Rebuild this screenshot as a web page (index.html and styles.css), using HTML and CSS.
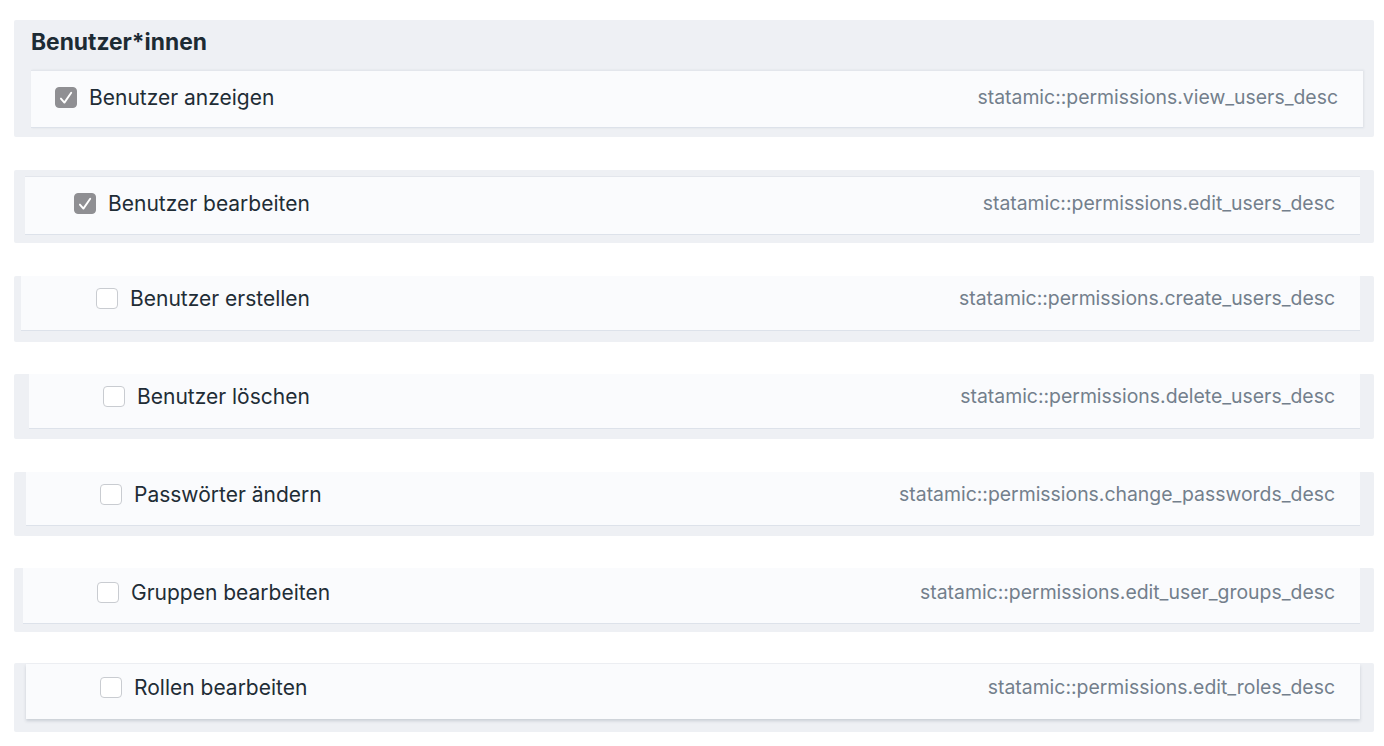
FILE: index.html
```html
<!DOCTYPE html>
<html lang="de">
<head>
<meta charset="utf-8">
<title>Berechtigungen – Benutzer*innen</title>
<link rel="stylesheet" href="styles.css">
</head>
<body>
<div class="permission-group">
  <section class="tier tier-1">
    <h2 class="group-title">Benutzer*innen</h2>
    <div class="perm perm-1">
      <label class="perm-label"><span class="check is-checked"><svg viewBox="0 0 20 20"><path d="M4.9 10.6l3.5 4 6.8-9.8"/></svg></span><span class="perm-name">Benutzer anzeigen</span></label>
      <span class="perm-desc">statamic::permissions.view_users_desc</span>
    </div>
  </section>
  <section class="tier tier-2">
    <div class="perm perm-2">
      <label class="perm-label"><span class="check is-checked"><svg viewBox="0 0 20 20"><path d="M4.9 10.6l3.5 4 6.8-9.8"/></svg></span><span class="perm-name">Benutzer bearbeiten</span></label>
      <span class="perm-desc">statamic::permissions.edit_users_desc</span>
    </div>
  </section>
  <section class="tier tier-3">
    <div class="perm perm-3">
      <label class="perm-label"><span class="check"></span><span class="perm-name">Benutzer erstellen</span></label>
      <span class="perm-desc">statamic::permissions.create_users_desc</span>
    </div>
  </section>
  <section class="tier tier-4">
    <div class="perm perm-4">
      <label class="perm-label"><span class="check"></span><span class="perm-name">Benutzer löschen</span></label>
      <span class="perm-desc">statamic::permissions.delete_users_desc</span>
    </div>
  </section>
  <section class="tier tier-5">
    <div class="perm perm-5">
      <label class="perm-label"><span class="check"></span><span class="perm-name">Passwörter ändern</span></label>
      <span class="perm-desc">statamic::permissions.change_passwords_desc</span>
    </div>
  </section>
  <section class="tier tier-6">
    <div class="perm perm-6">
      <label class="perm-label"><span class="check"></span><span class="perm-name">Gruppen bearbeiten</span></label>
      <span class="perm-desc">statamic::permissions.edit_user_groups_desc</span>
    </div>
  </section>
  <section class="tier tier-7">
    <div class="perm perm-7">
      <label class="perm-label"><span class="check"></span><span class="perm-name">Rollen bearbeiten</span></label>
      <span class="perm-desc">statamic::permissions.edit_roles_desc</span>
    </div>
  </section>
</div>
</body>
</html>
```

FILE: styles.css
```css
* {
  box-sizing: border-box;
}

html,
body {
  margin: 0;
  background: #ffffff;
}

body {
  font-family: Inter, "Noto Sans", "Liberation Sans", sans-serif;
  color: #1d2b34;
}

.permission-group {
  width: 1360px;
  margin: 0 0 0 14px;
  padding-top: 20px;
}

/* each nesting level sits on its own grey strip */
.tier {
  background: #eef0f4;
  border-radius: 2px;
  display: flex;
  flex-direction: column;
}

.group-title {
  margin: 0;
  padding: 8px 0 0 17px;
  height: 50px;
  font-size: 22.8px;
  font-weight: 700;
  line-height: 28px;
  color: #1d2b34;
}

.perm {
  display: flex;
  align-items: flex-start;
  justify-content: space-between;
  background: #fafbfd;
  border-bottom: 1px solid #dde2ea;
  padding-right: 25px;
}

.perm-label {
  display: flex;
  align-items: center;
  gap: 12px;
  height: 21px;
}

.perm-name {
  font-size: 21px;
  line-height: 21px;
  color: #1f2d36;
}

.perm-desc {
  font-size: 19.4px;
  line-height: 21px;
  color: #737f8c;
}

/* checkbox */
.check {
  width: 22px;
  height: 21px;
  flex: none;
  border: 1px solid #c9ccd1;
  border-radius: 4px;
  background: #ffffff;
  display: flex;
  align-items: center;
  justify-content: center;
}

.check.is-checked {
  background: #8f8f93;
  border-color: #8f8f93;
}

.check svg {
  flex: none;
  width: 20px;
  height: 20px;
  fill: none;
  stroke: #ffffff;
  stroke-width: 1.9;
  stroke-linecap: round;
  stroke-linejoin: round;
}

/* tiers */
.tier-1 {
  padding-bottom: 9px;
}
.perm-1 {
  margin: 0 11px 0 17px;
  height: 58px;
  padding-top: 16px;
  padding-left: 24px;
  border-top: 1px solid #e3e6ec;
  box-shadow: 1px 0 2px rgba(40, 50, 70, 0.08);
}

.tier-2 {
  margin-top: 33px;
  padding: 6px 0 8px;
}
.perm-2 {
  margin: 0 14px 0 11px;
  height: 59px;
  padding-top: 16px;
  padding-left: 49px;
  border-top: 1px solid #e3e6ec;
}

.tier-3 {
  margin-top: 33px;
  padding-bottom: 11px;
}
.perm-3 {
  margin: 0 14px 0 7px;
  height: 55px;
  padding-top: 12px;
  padding-left: 75px;
}

.tier-4 {
  margin-top: 32px;
  padding-bottom: 10px;
}
.perm-4 {
  margin: 0 14px 0 15px;
  height: 55px;
  padding-top: 12px;
  padding-left: 74px;
}

.tier-5 {
  margin-top: 33px;
  padding-bottom: 10px;
}
.perm-5 {
  margin: 0 14px 0 12px;
  height: 54px;
  padding-top: 12px;
  padding-left: 74px;
}

.tier-6 {
  margin-top: 32px;
  padding-bottom: 8px;
}
.perm-6 {
  margin: 0 14px 0 9px;
  height: 56px;
  padding-top: 14px;
  padding-left: 74px;
}

.tier-7 {
  margin-top: 31px;
  padding: 1px 0 13px;
}
.perm-7 {
  margin: 0 14px 0 12px;
  height: 55px;
  padding-top: 13px;
  padding-left: 74px;
  border-bottom: 0;
  box-shadow: 0 2px 3px rgba(40, 55, 80, 0.18);
}
```
